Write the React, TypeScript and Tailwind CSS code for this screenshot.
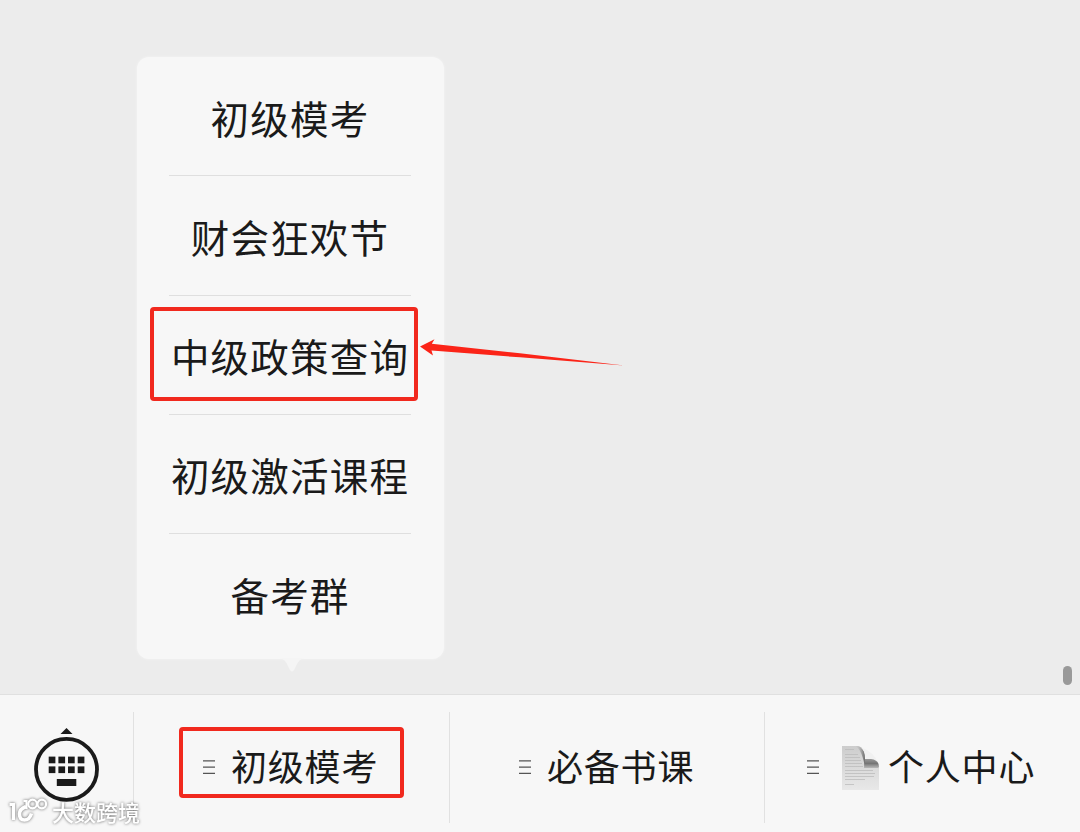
import * as React from 'react';

const MENU_ITEMS = ['初级模考', '财会狂欢节', '中级政策查询', '初级激活课程', '备考群'];

function KeyboardIcon() {
  return (
    <svg className="h-[76px] w-[66px]" viewBox="-0.5 -0.4 66 76" fill="#1a1a1a">
      <path d="M27 6.5 33 .5l6 6z" />
      <circle cx="33" cy="42" r="30.5" fill="none" stroke="#1a1a1a" strokeWidth="3.8" />
      {[29.2, 39].map((y) =>
        [15.2, 24.9, 34.5, 44.2].map((x) => <rect key={`${x}-${y}`} x={x} y={y} width="6.7" height="6.7" />)
      )}
      <rect x="23.3" y="51.6" width="19.5" height="7" />
    </svg>
  );
}

function PageIcon() {
  return (
    <svg className="mt-[2px] h-[46px] w-[40px] shrink-0" viewBox="0 0 40 46">
      <defs>
        <linearGradient id="paper" x1="0" y1="0" x2="0" y2="1">
          <stop offset="0" stopColor="#cdcdcd" />
          <stop offset="1" stopColor="#e8e8e8" />
        </linearGradient>
        <linearGradient id="curlSide" x1="0" y1="0" x2="1" y2="0">
          <stop offset="0" stopColor="#c8c8c8" stopOpacity="0" />
          <stop offset="1" stopColor="#666" />
        </linearGradient>
        <linearGradient id="curlFold" x1="0" y1="0" x2="0" y2="1">
          <stop offset="0" stopColor="#999" />
          <stop offset=".5" stopColor="#757575" />
          <stop offset="1" stopColor="#b8b8b8" />
        </linearGradient>
      </defs>
      <path d="M1 1h16q7 1 7 13h6q8 1 8 8v23H1z" fill="url(#paper)" />
      <path d="M14 1h3q7 1 7 13v8q-2-10-4-14-2-5-6-7z" fill="url(#curlSide)" />
      <path d="M19 2q5 3 5.500 12 9-1 13.500 6Q34 7 19 2z" fill="#f1f1f1" />
      <path d="M24 14h6q8 1 8 8l-1 1H23z" fill="url(#curlFold)" />
      <path
        d="M4 4.500h9M4 9.500h13M4 12.500h15M4 15.500h16M4 18.500h17M4 21.500h18M4 25.500h28M4 28.500h30M4 31.500h29M4 34.500h20M4 39.500h9"
        stroke="#bdbdbd"
        strokeWidth=".8"
      />
    </svg>
  );
}

function MenuLines() {
  return (
    <svg className="h-4 w-3 shrink-0" viewBox="0 0 12 16" stroke="#555" strokeWidth="1.2">
      <path d="M0 1.8h12M0 8.1h12M0 14.3h12" />
    </svg>
  );
}

function PopupMenu() {
  return (
    <div className="relative ml-[137px] mt-[57px] flex h-[602px] w-[307px] flex-col rounded-[12px] bg-[#f7f7f7] px-8 shadow-[0_0_3px_rgba(255,255,255,0.5)]">
      <ul className="w-[242px] divide-y divide-[#dfdfdf]">
        {MENU_ITEMS.map((item) => (
          <li key={item} className="flex h-[119.25px] items-center justify-center whitespace-nowrap pt-px">
            {item}
          </li>
        ))}
      </ul>
      <svg className="absolute left-[143px] top-[601px] h-[15px] w-[24px]" viewBox="0 0 24 15">
        <path d="M0 0h24q-5 1-8 8l-2 4q-2 3-4 0L8 8Q5 1 0 0z" fill="#f5f5f5" />
      </svg>
      {/* highlight around the third item */}
      <div className="absolute left-[12.5px] top-[249.5px] h-[94px] w-[268px] rounded-[4px] border-[4px] border-[#f1291e]" />
      <svg className="absolute left-[283px] top-[281px] h-[30px] w-[206px]" viewBox="0 0 206 30">
        <path d="M0 8.500 14.500 1.300 11.800 5.800 100 15.200 204 27.500 100 19.300 11.500 12.500l1.500 5z" fill="#fb2418" />
      </svg>
    </div>
  );
}

function Tab(props: { label: string; className: string; icon?: React.ReactNode }) {
  return (
    <div className={`flex items-center pt-[7px] ${props.className}`}>
      <MenuLines />
      {props.icon}
      <span className="mb-1 whitespace-nowrap">{props.label}</span>
    </div>
  );
}

function Separator() {
  return <div className="mt-[17px] h-[111px] w-px shrink-0 bg-[#e1e1e1]" />;
}

function Watermark() {
  return (
    <div className="absolute left-[9px] top-[102px] flex items-center drop-shadow-[0_0_1.5px_rgba(0,0,0,0.6)]">
      <svg className="h-[28px] w-[39px]" viewBox="0 0 39 28" fill="none" stroke="#fff">
        <path d="M.5 7.500H4.500V23" strokeWidth="3" />
        <path d="M17 9.500q-6.500 2.500-6.500 7.500 0 6 5 6 5 0 7-6.500" strokeWidth="3.5" />
        <path d="M14.500 4H17.500v8" strokeWidth="2.2" />
        <circle cx="23.500" cy="7" r="4.300" strokeWidth="2.2" />
        <circle cx="32.800" cy="7" r="4.300" strokeWidth="2.2" />
      </svg>
      <span className="ml-[4px] whitespace-nowrap text-[22px] font-medium leading-7 tracking-normal text-white">
        大数跨境
      </span>
    </div>
  );
}

export default function App() {
  return (
    <div className="flex h-[832px] w-[1080px] flex-col overflow-hidden bg-[#ececec] font-['Noto_Sans_CJK_SC',sans-serif] text-[#1a1a1a]">
      <div className="flex h-[694px] shrink-0 justify-between text-[38.5px] leading-[48px] tracking-[1.2px]">
        <PopupMenu />
        <div className="mr-[8px] mt-[666px] h-[19px] w-[9px] rounded-full bg-[#999]" />
      </div>
      <div className="relative flex h-[138px] shrink-0 border-t border-[#e0e0e0] bg-[#f7f7f7] text-[36px] leading-[48px] tracking-[0.8px]">
        <div className="flex w-[133px] shrink-0 justify-center pr-px pt-[32px]">
          <KeyboardIcon />
        </div>
        <Separator />
        <div className="relative flex w-[315px] shrink-0">
          <Tab label="初级模考" className="gap-[16px] pl-[69px]" />
          <div className="absolute left-[45px] top-[32px] h-[71px] w-[225px] rounded-[4px] border-[4px] border-[#f1291e]" />
        </div>
        <Separator />
        <Tab label="必备书课" className="w-[314px] shrink-0 gap-[16px] pl-[69px]" />
        <Separator />
        <Tab label="个人中心" icon={<PageIcon />} className="flex-1 gap-[7px] pl-[42px] [&>svg:first-child]:mr-[15px]" />
        <Watermark />
      </div>
    </div>
  );
}
